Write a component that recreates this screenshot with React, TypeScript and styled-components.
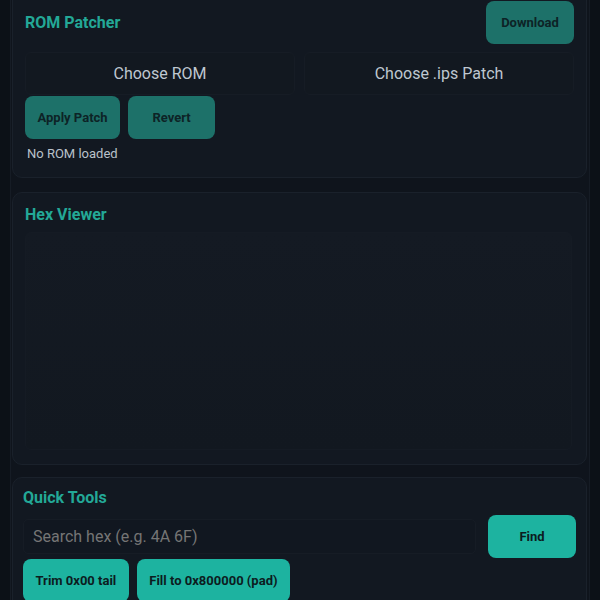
import React from 'react';
import styled, { createGlobalStyle } from 'styled-components';

const GlobalStyle = createGlobalStyle`
  html, body {
    margin: 0;
    padding: 0;
    background: #0c1117;
    font-family: Roboto, 'Liberation Sans', sans-serif;
    overflow: hidden;
  }
`;

const Shell = styled.div`
  margin: 0 10px;
  min-height: 600px;
  background: #0f141c;
  border-left: 1px solid #161c25;
  border-right: 1px solid #161c25;
  padding: 0 2px 0 1px;
  display: flex;
  flex-direction: column;
  gap: 12px;
`;

const Card = styled.section<{ $pad: string; $top?: number }>`
  background: #121821;
  border: 1px solid #1a212b;
  border-radius: 10px;
  padding: ${({ $pad }) => $pad};
  margin-top: ${({ $top = 0 }) => $top}px;
`;

const Header = styled.div`
  display: flex;
  align-items: center;
  justify-content: space-between;
  margin-bottom: 8px;
`;

const Title = styled.h2`
  margin: 0;
  font-size: 16px;
  line-height: 19px;
  font-weight: 700;
  color: #23a897;
`;

const Button = styled.button<{ $dim?: boolean; $w?: number }>`
  height: 43px;
  width: ${({ $w }) => ($w ? `${$w}px` : 'auto')};
  padding: 0 12.5px;
  border: none;
  border-radius: 8px;
  font-family: Roboto, 'Liberation Sans', sans-serif;
  font-size: 13px;
  font-weight: 700;
  background: ${({ $dim }) => ($dim ? '#1d7169' : '#1db3a0')};
  color: ${({ $dim }) => ($dim ? '#0d2326' : '#0c1c20')};
  flex-shrink: 0;
`;

const FileRow = styled.div`
  display: grid;
  grid-template-columns: 1fr 1fr;
  gap: 9px;
`;

const FileBox = styled.div`
  box-sizing: border-box;
  height: 43px;
  display: flex;
  align-items: center;
  justify-content: center;
  background: #121820;
  border: 1px solid #161c25;
  border-radius: 6px;
  color: #bfc7d0;
  font-size: 16px;
`;

const ButtonRow = styled.div`
  display: flex;
  gap: 8px;
  margin-top: 1px;
`;

const Status = styled.div`
  margin-top: 7px;
  padding-left: 2px;
  font-size: 13px;
  line-height: 15px;
  color: #b9c1ca;
`;

const HexArea = styled.div`
  box-sizing: border-box;
  margin-top: 8px;
  margin-right: 2px;
  height: 218px;
  border-radius: 6px;
  background: linear-gradient(#141a23, #121820);
  border: 1px solid #151b24;
`;

const SearchRow = styled.div`
  display: flex;
  align-items: center;
  gap: 12px;
  margin-top: 8px;
`;

const SearchInput = styled.input`
  flex: 1;
  min-width: 0;
  height: 35px;
  box-sizing: border-box;
  padding: 0 9px;
  background: #111720;
  border: 1px solid #161c25;
  border-radius: 5px;
  color: #c5cdd6;
  font-family: Roboto, 'Liberation Sans', sans-serif;
  font-size: 16px;
  outline: none;

  ::placeholder {
    color: #78808a;
  }
`;

export default function App() {
  return (
    <>
      <GlobalStyle />
      <Shell>
        <Card $pad="12px 12px 16px" $top={-12}>
          <Header>
            <Title>ROM Patcher</Title>
            <Button $dim $w={88}>Download</Button>
          </Header>
          <FileRow>
            <FileBox>Choose ROM</FileBox>
            <FileBox>Choose .ips Patch</FileBox>
          </FileRow>
          <ButtonRow>
            <Button $dim>Apply Patch</Button>
            <Button $dim $w={87}>Revert</Button>
          </ButtonRow>
          <Status>No ROM loaded</Status>
        </Card>
        <Card $pad="12px 12px 14px" $top={2}>
          <Title>Hex Viewer</Title>
          <HexArea />
        </Card>
        <Card $pad="10px 10px 14px">
          <Title>Quick Tools</Title>
          <SearchRow>
            <SearchInput placeholder="Search hex (e.g. 4A 6F)" />
            <Button $w={88}>Find</Button>
          </SearchRow>
          <ButtonRow>
            <Button>Trim 0x00 tail</Button>
            <Button>Fill to 0x800000 (pad)</Button>
          </ButtonRow>
        </Card>
      </Shell>
    </>
  );
}
